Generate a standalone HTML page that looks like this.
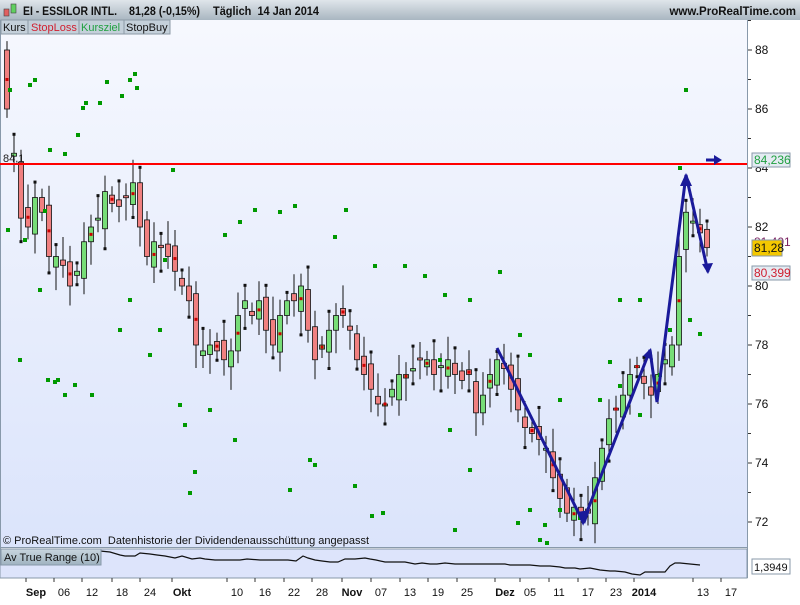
<!DOCTYPE html>
<html><head><meta charset="utf-8"><style>
body{margin:0;width:800px;height:600px;overflow:hidden;font-family:"Liberation Sans",sans-serif;background:#fff}
</style></head><body>
<svg id="s" width="800" height="600" xmlns="http://www.w3.org/2000/svg" font-family="Liberation Sans, sans-serif">
<defs>
<linearGradient id="hd" x1="0" y1="0" x2="0" y2="1"><stop offset="0" stop-color="#dfe5ea"/><stop offset="1" stop-color="#a9b6c1"/></linearGradient>
<linearGradient id="bg" x1="0" y1="0" x2="0" y2="1"><stop offset="0" stop-color="#f6f8fe"/><stop offset="1" stop-color="#dbe4fb"/></linearGradient>
<linearGradient id="lb" x1="0" y1="0" x2="0" y2="1"><stop offset="0" stop-color="#c9d6df"/><stop offset="1" stop-color="#9fb3c0"/></linearGradient>
</defs>
<rect x="0" y="0" width="800" height="600" fill="#fff"/>
<rect x="0" y="0" width="800" height="20" fill="url(#hd)"/>
<rect x="0" y="20" width="747" height="527" fill="url(#bg)"/>
<line x1="0.5" y1="20" x2="0.5" y2="578" stroke="#8899aa"/>
<line x1="747.5" y1="20" x2="747.5" y2="578" stroke="#8899aa"/>
<rect x="0" y="549" width="747" height="29" fill="#dde4fb" stroke="#8899aa"/>
<line x1="0" y1="547.5" x2="747" y2="547.5" stroke="#8899aa"/>
<g id="cd"></g>
<!-- header -->
<rect x="4" y="9" width="5" height="7" fill="#e06060" stroke="#444" stroke-width="0.6"/>
<rect x="11" y="4" width="5" height="9" fill="#60d060" stroke="#444" stroke-width="0.6"/>
<g font-size="11.5" font-weight="bold" fill="#111">
<text x="23" y="15" textLength="94" lengthAdjust="spacingAndGlyphs">EI - ESSILOR INTL.</text>
<text x="129" y="15" textLength="71" lengthAdjust="spacingAndGlyphs">81,28 (-0,15%)</text>
<text x="213" y="15" textLength="106" lengthAdjust="spacingAndGlyphs">Täglich&#160;&#160;14 Jan 2014</text>
<text x="796" y="15" text-anchor="end">www.ProRealTime.com</text>
</g>
<rect x="1" y="20" width="27" height="14" fill="#c4d0da" stroke="#8c9aa6"/>
<text x="3" y="31" font-size="11" fill="#111">Kurs</text>
<rect x="28" y="20" width="51" height="14" fill="#c4d0da" stroke="#8c9aa6"/>
<text x="31" y="31" font-size="11" fill="#d02030">StopLoss</text>
<rect x="79" y="20" width="45" height="14" fill="#c4d0da" stroke="#8c9aa6"/>
<text x="81" y="31" font-size="11" fill="#20a040">Kursziel</text>
<rect x="124" y="20" width="46" height="14" fill="#c4d0da" stroke="#8c9aa6"/>
<text x="126" y="31" font-size="11" fill="#111">StopBuy</text>
<!-- red line -->
<line x1="0" y1="164" x2="747" y2="164" stroke="#ff0000" stroke-width="2"/>
<text x="3" y="162" font-size="11" fill="#222">84,1</text>
<g id="zz"></g>
<!-- right axis -->
<g id="ax" font-size="12" fill="#111"></g>
<rect x="752" y="153" width="38" height="14" fill="#e4ebf2" stroke="#8899aa"/>
<text x="754" y="164" font-size="12" fill="#20a040">84,236</text>
<text x="754" y="246" font-size="12" fill="#7a2060">81,401</text>
<rect x="752" y="240" width="30" height="16" fill="#f4c800" stroke="#8899aa"/>
<text x="754" y="252" font-size="12" fill="#111">81,28</text>
<rect x="752" y="266" width="38" height="14" fill="#e4ebf2" stroke="#8899aa"/>
<text x="754" y="277" font-size="12" fill="#d02030">80,399</text>
<text x="3" y="544" font-size="11" fill="#111">© ProRealTime.com&#160;&#160;Datenhistorie der Dividendenausschüttung angepasst</text>
<!-- indicator -->
<polyline fill="none" stroke="#111" stroke-width="1.2" points="1,560 10,551 100,551 110,552 120,555 125,556 135,556 140,553 150,554 157,555 165,556 175,558 182,556 192,559 200,558 205,559 215,560 222,560 235,560 240,560 247,559 260,560 275,560 288,560 296,561 303,556 308,558 315,560 322,561 330,562 338,562 345,559 350,559 355,559 365,558 370,559 376,560 385,562 395,562 405,562 415,564 422,563 430,564 437,564 445,563 455,564 465,564 475,564 485,564 495,564 505,564 510,565 520,565 530,565 540,566 545,566 550,566 560,567 565,568 575,568 580,569 590,568 595,569 600,570 610,571 615,571 625,572 632,574 640,575 645,572 660,572 665,572 670,566 675,563 680,563 690,564 700,565"/>
<rect x="1" y="549" width="100" height="16" fill="url(#lb)" stroke="#8899aa"/>
<text x="4" y="561" font-size="11" fill="#111">Av True Range (10)</text>
<rect x="752" y="559" width="38" height="15" fill="#fff" stroke="#8899aa"/>
<text x="754" y="571" font-size="11" fill="#111">1,3949</text>
<g id="bx" font-size="11" fill="#111"></g>
</svg>
<script>
var NS="http://www.w3.org/2000/svg";
function el(p,t,a,txt){var e=document.createElementNS(NS,t);for(var k in a)e.setAttribute(k,a[k]);if(txt)e.textContent=txt;document.getElementById(p).appendChild(e);return e;}
function Y(p){return 50+(88-p)*29.5;}
var c=[86,84.5,82.3,82,83,82.5,81,81,80.7,80,80.5,81.5,82,82.3,83.2,82.8,82.7,83,83.5,82,81,81.5,81.3,81,80.5,80,79.5,78,77.8,78,77.8,77.5,77.8,79,79.5,79,79.5,78.5,78,79,79.5,79.5,80,78.5,77.5,78,78.5,79,79,78.5,77.5,77,76.5,76,76,76.5,77,77,77.2,77.5,77.5,77,77.3,77.5,77,76.8,77,75.7,76.3,77,77.5,77.2,76.5,75.8,75.2,75,74.8,74.5,73.5,72.8,72.3,72.5,72.2,72.3,73.5,74.5,75.5,75.8,76.3,77,77.3,76.7,76.3,77,77.5,78,81,82.5,82.2,81.8,81.3];
var o=[88,84.4,84.2];
for(var i=0;i<c.length;i++){
 var x=7+i*7.0, cl=c[i], op=i<3?o[i]:c[i-1]+((i*37)%7-3)*0.12;
 var hi=Math.max(op,cl)+0.3+((i*13)%5)*0.12, lo=Math.min(op,cl)-0.3-((i*7)%5)*0.12;
 el("cd","line",{x1:x,y1:Y(hi),x2:x,y2:Y(lo),stroke:"#111","stroke-width":1});
 var t=Y(Math.max(op,cl)),b=Y(Math.min(op,cl));if(b-t<2)b=t+2;
 el("cd","rect",{x:x-2.5,y:t,width:5,height:b-t,fill:cl>=op?"#77dd77":"#f08080",stroke:"#111","stroke-width":0.8});
 if(i%3==1)el("cd","rect",{x:x-1.5,y:Y(hi)-1,width:3,height:3,fill:"#111"});
 if(i%4==2)el("cd","rect",{x:x-1.5,y:Y(lo)-1,width:3,height:3,fill:"#111"});
 if(i%3==0)el("cd","rect",{x:x-1.5,y:Y((op+cl)/2)-1.5,width:3,height:3,fill:"#cc0000"});
}
var g=[[35,80],[65,154],[86,103],[100,103],[107,82],[135,74],[78,135],[83,108],[122,96],[137,88],[173,170],[45,211],[8,230],[25,240],[40,290],[20,360],[10,90],[48,380],[55,382],[65,395],[75,385],[92,395],[120,330],[130,300],[150,355],[160,330],[165,260],[180,405],[185,425],[195,472],[210,410],[225,235],[240,222],[255,210],[280,212],[295,206],[346,210],[335,237],[375,266],[405,266],[425,276],[445,295],[470,300],[500,272],[520,335],[530,355],[560,400],[600,400],[610,362],[620,386],[640,415],[660,375],[670,330],[690,320],[700,334],[686,90],[680,168],[315,465],[310,460],[290,490],[235,440],[190,493],[355,486],[372,516],[383,513],[450,430],[470,470],[455,530],[540,540],[547,543],[530,510],[518,523],[560,510],[580,518],[545,525],[640,300],[620,300],[440,360],[130,80],[58,380],[50,150],[30,85]];
g.forEach(function(p){el("cd","rect",{x:p[0]-2,y:p[1]-2,width:4,height:4,fill:"#009900"});});
el("zz","polyline",{points:"497,348 583,522 650,350 657,402 686,175 708,272",fill:"none",stroke:"#1a1a9a","stroke-width":3,"stroke-linejoin":"miter"});
el("zz","polygon",{points:"577,512 585,524 590,510",fill:"#1a1a9a"});
el("zz","polygon",{points:"643,356 651,348 653,360",fill:"#1a1a9a"});
el("zz","polygon",{points:"680,186 686,173 692,186",fill:"#1a1a9a"});
el("zz","polygon",{points:"702,264 708,274 713,263",fill:"#1a1a9a"});
el("zz","line",{x1:706,y1:160,x2:716,y2:160,stroke:"#1a1a9a","stroke-width":3});
el("zz","polygon",{points:"714,155 722,160 714,165",fill:"#1a1a9a"});
for(var p=72;p<=89;p+=1){var y=Y(p);el("ax","line",{x1:748,y1:y,x2:(p%2==0?752:751),y2:y,stroke:"#333"});
 if(p%2==0&&p!=84)el("ax","text",{x:755,y:y+4},""+p);}
el("ax","text",{x:755,y:172},"84");
var L=[[36,"Sep",1],[64,"06"],[92,"12"],[122,"18"],[150,"24"],[182,"Okt",1],[237,"10"],[265,"16"],[294,"22"],[322,"28"],[352,"Nov",1],[381,"07"],[410,"13"],[438,"19"],[467,"25"],[505,"Dez",1],[530,"05"],[559,"11"],[588,"17"],[616,"23"],[644,"2014",1],[703,"13"],[731,"17"]];
L.forEach(function(l){el("bx","line",{x1:l[0]-10,y1:578,x2:l[0]-10,y2:582,stroke:"#333"});var t=el("bx","text",{x:l[0],y:596,"text-anchor":"middle"},l[1]);if(l[2])t.setAttribute("font-weight","bold");});
</script>
</body></html>
